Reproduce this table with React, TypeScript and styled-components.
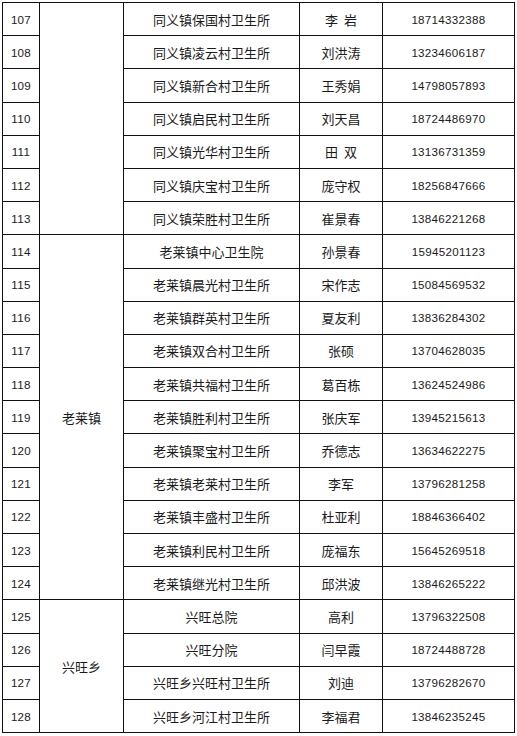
import React from "react"
import styled, { createGlobalStyle } from "styled-components"

const GlobalStyle = createGlobalStyle`
  html, body {
    margin: 0;
    padding: 0;
    background: #ffffff;
  }
`

const Page = styled.div`
  padding: 2px 0 0 2px;
  width: 517px;
  box-sizing: border-box;
`

const Table = styled.table`
  border-collapse: collapse;
  table-layout: fixed;
  width: 512px;
  font-family: "Noto Sans CJK SC", "Liberation Sans", sans-serif;
  color: #1a1a1a;
`

const Col = styled.col<{ $w: number }>`
  width: ${(p) => p.$w}px;
`

const Cell = styled.td<{ $mono?: boolean }>`
  border: 1px solid #111;
  height: 32.2px;
  padding: 0;
  text-align: center;
  vertical-align: middle;
  font-size: ${(p) => (p.$mono ? "11.6px" : "13px")};
  font-family: ${(p) =>
    p.$mono ? `"Liberation Sans", sans-serif` : `"Noto Sans CJK SC", sans-serif`};
  letter-spacing: ${(p) => (p.$mono ? "0.3px" : "0")};
  white-space: pre;
`

type Row = { no: number; unit: string; name: string; phone: string }

const rows: Row[] = [
  { no: 107, unit: "同义镇保国村卫生所", name: "李  岩", phone: "18714332388" },
  { no: 108, unit: "同义镇凌云村卫生所", name: "刘洪涛", phone: "13234606187" },
  { no: 109, unit: "同义镇新合村卫生所", name: "王秀娟", phone: "14798057893" },
  { no: 110, unit: "同义镇启民村卫生所", name: "刘天昌", phone: "18724486970" },
  { no: 111, unit: "同义镇光华村卫生所", name: "田  双", phone: "13136731359" },
  { no: 112, unit: "同义镇庆宝村卫生所", name: "庞守权", phone: "18256847666" },
  { no: 113, unit: "同义镇荣胜村卫生所", name: "崔景春", phone: "13846221268" },
  { no: 114, unit: "老莱镇中心卫生院", name: "孙景春", phone: "15945201123" },
  { no: 115, unit: "老莱镇晨光村卫生所", name: "宋作志", phone: "15084569532" },
  { no: 116, unit: "老莱镇群英村卫生所", name: "夏友利", phone: "13836284302" },
  { no: 117, unit: "老莱镇双合村卫生所", name: "张硕", phone: "13704628035" },
  { no: 118, unit: "老莱镇共福村卫生所", name: "葛百栋", phone: "13624524986" },
  { no: 119, unit: "老莱镇胜利村卫生所", name: "张庆军", phone: "13945215613" },
  { no: 120, unit: "老莱镇聚宝村卫生所", name: "乔德志", phone: "13634622275" },
  { no: 121, unit: "老莱镇老莱村卫生所", name: "李军", phone: "13796281258" },
  { no: 122, unit: "老莱镇丰盛村卫生所", name: "杜亚利", phone: "18846366402" },
  { no: 123, unit: "老莱镇利民村卫生所", name: "庞福东", phone: "15645269518" },
  { no: 124, unit: "老莱镇继光村卫生所", name: "邱洪波", phone: "13846265222" },
  { no: 125, unit: "兴旺总院", name: "高利", phone: "13796322508" },
  { no: 126, unit: "兴旺分院", name: "闫早霞", phone: "18724488728" },
  { no: 127, unit: "兴旺乡兴旺村卫生所", name: "刘迪", phone: "13796282670" },
  { no: 128, unit: "兴旺乡河江村卫生所", name: "李福君", phone: "13846235245" },
]

// first row index of each town group -> [label, rowspan]
const groups: Record<number, [string, number]> = {
  0: ["", 7],
  7: ["老莱镇", 11],
  18: ["兴旺乡", 4],
}

const widths = [37, 84, 176, 83, 132]

const App: React.FC = () => {
  return (
    <Page>
      <GlobalStyle />
      <Table>
        <colgroup>
          {widths.map((w, i) => (
            <Col key={i} $w={w} />
          ))}
        </colgroup>
        <tbody>
          {rows.map((r, i) => (
            <tr key={r.no}>
              <Cell $mono>{r.no}</Cell>
              {groups[i] && <Cell rowSpan={groups[i][1]}>{groups[i][0]}</Cell>}
              <Cell>{r.unit}</Cell>
              <Cell>{r.name}</Cell>
              <Cell $mono>{r.phone}</Cell>
            </tr>
          ))}
        </tbody>
      </Table>
    </Page>
  )
}

export default App
